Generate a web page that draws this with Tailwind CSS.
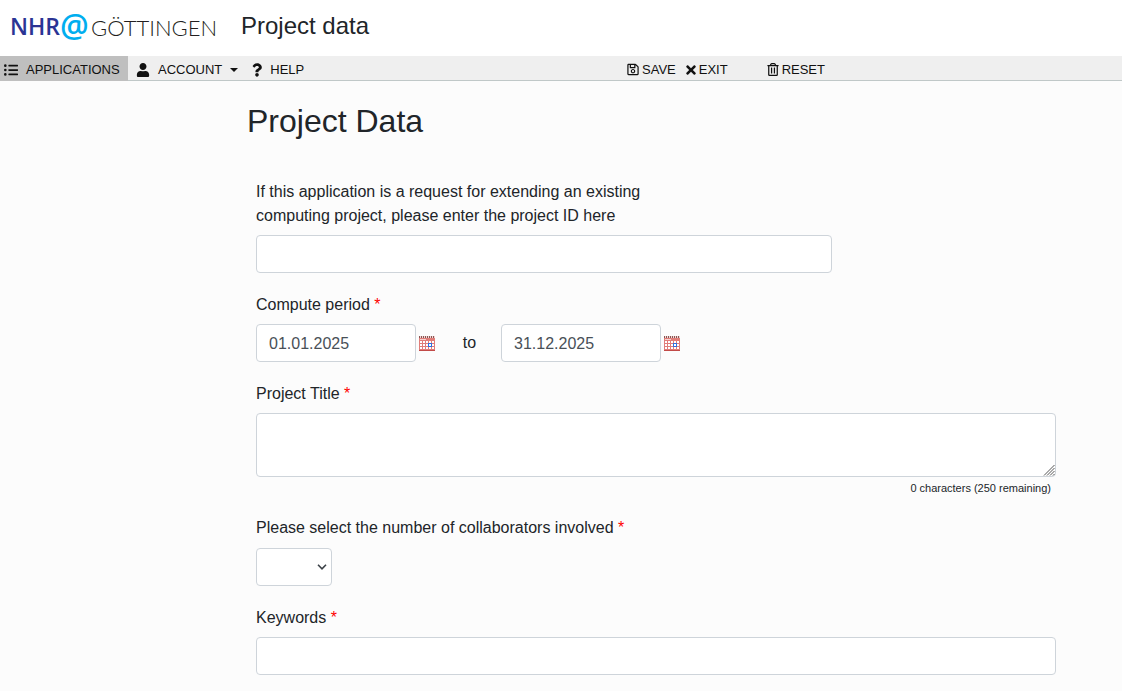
<!DOCTYPE html>
<html lang="en">
<head>
<meta charset="utf-8">
<meta name="viewport" content="width=device-width, initial-scale=1">
<title>Project data</title>
<script src="https://cdn.jsdelivr.net/npm/@tailwindcss/browser@4"></script>
</head>
<body class="min-h-screen bg-[#fcfcfc] font-['Liberation_Sans',Arial,sans-serif] text-base text-[#212529]">
<svg class="hidden" aria-hidden="true">
  <symbol id="calendar" viewBox="0 -1 16 16" shape-rendering="crispEdges">
    <rect y="0" width="16" height="2" fill="#f0d8d6"/>
    <path d="M0 0h1v2H0zM2 0h1v2H2zM4 0h1v2H4zM6 0h1v2H6zM8 0h1v2H8zM10 0h1v2h-1zM12 0h1v2h-1zM14 0h1v2h-1z" fill="#8a5552"/>
    <rect y="2" width="16" height="13" fill="#e07d79"/>
    <rect x="1" y="3" width="6" height="1" fill="#f6cfcd"/>
    <path d="M1 5h2v2H1zM4 5h2v2H4zM7 5h2v2H7zM10 5h2v2h-2zM13 5h2v2h-2zM1 8h2v2H1zM4 8h2v2H4zM7 8h2v2H7zM10 8h2v2h-2zM13 8h2v2h-2zM1 11h2v2H1zM4 11h2v2H4zM7 11h2v2H7zM10 11h2v2h-2zM13 11h2v2h-2z" fill="#fff"/>
    <rect x="9" y="7" width="4" height="4" fill="#2f6fe0"/>
    <rect x="10" y="8" width="2" height="2" fill="#fff"/>
    <rect y="14" width="16" height="1" fill="#c24a48"/>
  </symbol>
</svg>
<header class="flex h-14 items-center bg-white pb-1">
  <a href="#" aria-label="NHR@Göttingen" class="flex w-[241px] shrink-0 items-center pl-2.5">
    <svg class="h-12 w-[220px]" viewBox="0 -4 220 48">
      <text x="0" y="29" font-family="Open Sans, sans-serif" font-weight="600" font-size="23" fill="#2b3494">NHR</text>
      <text x="50" y="31" font-family="Open Sans, sans-serif" font-weight="600" font-size="32" fill="#00aeef">@</text>
      <text x="81" y="30" font-family="Lato, sans-serif" font-weight="300" font-size="22" fill="#231f20">GÖTTINGEN</text>
    </svg>
  </a>
  <p class="text-2xl">Project data</p>
</header>
<nav class="flex h-[25px] items-stretch border-b border-[#c0c8c8] bg-[#efefef] text-[13px] text-[#111]">
  <div class="flex w-[627px] shrink-0">
    <a href="#" class="-mb-px flex w-32 items-center gap-2 bg-[#bfbfbf] pt-0.5 pl-1">
      <svg class="size-3.5" viewBox="0 0 512 512" fill="currentColor"><path d="M48 48a48 48 0 1 0 48 48 48 48 0 0 0-48-48zm0 160a48 48 0 1 0 48 48 48 48 0 0 0-48-48zm0 160a48 48 0 1 0 48 48 48 48 0 0 0-48-48zm448 16H176a16 16 0 0 0-16 16v32a16 16 0 0 0 16 16h320a16 16 0 0 0 16-16v-32a16 16 0 0 0-16-16zm0-320H176a16 16 0 0 0-16 16v32a16 16 0 0 0 16 16h320a16 16 0 0 0 16-16V80a16 16 0 0 0-16-16zm0 160H176a16 16 0 0 0-16 16v32a16 16 0 0 0 16 16h320a16 16 0 0 0 16-16v-32a16 16 0 0 0-16-16z"/></svg>
      APPLICATIONS
    </a>
    <button type="button" class="flex items-center gap-2 pt-[3px] pl-2">
      <svg class="h-3.5 w-3.5" viewBox="0 0 448 512" fill="currentColor"><path d="M224 256c70.7 0 128-57.3 128-128S294.7 0 224 0 96 57.3 96 128s57.3 128 128 128zm89.6 32h-16.7c-22.2 10.2-46.9 16-72.9 16s-50.6-5.8-72.9-16h-16.7C60.2 288 0 348.2 0 422.4V464c0 26.5 21.5 48 48 48h352c26.5 0 48-21.5 48-48v-41.6c0-74.2-60.2-134.4-134.4-134.4z"/></svg>
      ACCOUNT
      <svg class="h-1 w-2" viewBox="0 0 8 4" fill="currentColor"><path d="M0 0h8L4 4z"/></svg>
    </button>
    <a href="#" class="flex items-center gap-2 pt-[3px] pl-3.5">
      <svg class="h-3.5 w-2.5" viewBox="0 0 384 512" fill="currentColor"><path d="M202.021 0C122.202 0 70.503 32.703 29.914 91.026c-7.363 10.58-5.093 25.086 5.178 32.874l43.138 32.709c10.373 7.865 25.132 6.026 33.253-4.148 25.049-31.381 43.63-49.449 82.757-49.449 30.764 0 68.816 19.799 68.816 49.631 0 22.552-18.617 34.134-48.993 51.164-35.423 19.86-82.299 44.576-82.299 106.405V320c0 13.255 10.745 24 24 24h72.471c13.255 0 24-10.745 24-24v-5.773c0-42.86 125.268-44.645 125.268-160.627C377.504 66.256 286.902 0 202.021 0zM192 373.459c-38.196 0-69.271 31.075-69.271 69.271 0 38.195 31.075 69.27 69.271 69.27s69.271-31.075 69.271-69.271-31.075-69.27-69.271-69.27z"/></svg>
      HELP
    </a>
  </div>
  <div class="flex pt-[3px]">
    <button type="button" class="flex items-center gap-[3px]">
      <svg class="h-[13px] w-3" viewBox="0 0 448 512" fill="currentColor"><path d="M433.941 129.941l-83.882-83.882A48 48 0 0 0 316.118 32H48C21.49 32 0 53.49 0 80v352c0 26.51 21.49 48 48 48h352c26.51 0 48-21.49 48-48V163.882a48 48 0 0 0-14.059-33.941zM272 80v80H144V80h128zm122 352H54a6 6 0 0 1-6-6V86a6 6 0 0 1 6-6h42v104c0 13.255 10.745 24 24 24h176c13.255 0 24-10.745 24-24V83.882l78.243 78.243a6 6 0 0 1 1.757 4.243V426a6 6 0 0 1-6 6zM224 232c-48.523 0-88 39.477-88 88s39.477 88 88 88 88-39.477 88-88-39.477-88-88-88zm0 128c-22.056 0-40-17.944-40-40s17.944-40 40-40 40 17.944 40 40-17.944 40-40 40z"/></svg>
      SAVE
    </button>
    <button type="button" class="ml-2.5 flex items-center gap-[3px]">
      <svg class="h-3.5 w-2.5" viewBox="0 0 352 512" fill="currentColor"><path d="M242.72 256l100.07-100.07c12.28-12.28 12.28-32.19 0-44.48l-22.24-22.24c-12.28-12.28-32.19-12.28-44.48 0L176 189.28 75.93 89.21c-12.28-12.28-32.19-12.28-44.48 0L9.21 111.45c-12.28 12.28-12.28 32.19 0 44.48L109.28 256 9.21 356.07c-12.28 12.28-12.28 32.19 0 44.48l22.24 22.24c12.28 12.28 32.2 12.28 44.48 0L176 322.72l100.07 100.07c12.28 12.28 32.2 12.28 44.48 0l22.24-22.24c12.28-12.28 12.28-32.19 0-44.48L242.72 256z"/></svg>
      EXIT
    </button>
    <button type="button" class="ml-[39px] flex items-center gap-[3px]">
      <svg class="h-[13px] w-3" viewBox="0 0 448 512" fill="currentColor"><path d="M268 416h24a12 12 0 0 0 12-12V188a12 12 0 0 0-12-12h-24a12 12 0 0 0-12 12v216a12 12 0 0 0 12 12zM432 80h-82.41l-34-56.7A48 48 0 0 0 274.41 0H173.59a48 48 0 0 0-41.16 23.3L98.41 80H16A16 16 0 0 0 0 96v16a16 16 0 0 0 16 16h16v336a48 48 0 0 0 48 48h288a48 48 0 0 0 48-48V128h16a16 16 0 0 0 16-16V96a16 16 0 0 0-16-16zM171.84 50.91A6 6 0 0 1 177 48h94a6 6 0 0 1 5.15 2.91L293.61 80H154.39zM368 464H80V128h288zm-212-48h24a12 12 0 0 0 12-12V188a12 12 0 0 0-12-12h-24a12 12 0 0 0-12 12v216a12 12 0 0 0 12 12z"/></svg>
      RESET
    </button>
  </div>
</nav>
<main class="pt-5 pr-[66px] pb-4 pl-[247px]">
  <h1 class="text-[32px] leading-10">Project Data</h1>
  <form class="mt-[39px] ml-[9px] flex flex-col gap-5">
    <div>
      <label for="pid" class="mb-[7px] block max-w-[400px] leading-6">If this application is a request for extending an existing computing project, please enter the project ID here</label>
      <input id="pid" type="text" class="block h-[38px] w-full max-w-[576px] rounded border border-[#ced4da] bg-white px-3 text-[#495057]">
    </div>
    <div>
      <label for="from" class="mb-[7px] block leading-6">Compute period <span class="text-[#f00]">*</span></label>
      <div class="flex items-center">
        <input id="from" type="text" value="01.01.2025" class="h-[38px] w-40 rounded border border-[#ced4da] bg-white px-3 pt-0.5 text-[#495057]">
        <button type="button" aria-label="Choose start date" class="ml-[3px]"><svg class="size-4"><use href="#calendar"/></svg></button>
        <label for="to" class="w-[66px] pl-[3px] text-center">to</label>
        <input id="to" type="text" value="31.12.2025" class="h-[38px] w-40 rounded border border-[#ced4da] bg-white px-3 pt-0.5 text-[#495057]">
        <button type="button" aria-label="Choose end date" class="ml-[3px]"><svg class="size-4"><use href="#calendar"/></svg></button>
      </div>
    </div>
    <div>
      <label for="title" class="mb-[7px] block leading-6">Project Title <span class="text-[#f00]">*</span></label>
      <div class="relative">
        <textarea id="title" class="block h-16 w-full resize-none rounded border border-[#ced4da] bg-white px-3 py-1.5 text-[#495057]"></textarea>
        <svg class="pointer-events-none absolute right-px bottom-px size-3" viewBox="0 0 12 12" stroke="#555" stroke-width="1"><path d="M1 11.500L11.500 1M4 11.500L11.500 4M7 11.500L11.500 7M10 11.500l1.500-1.500"/></svg>
      </div>
      <p class="mt-[3px] pr-[5px] text-right text-[11px] leading-4">0 characters (250 remaining)</p>
    </div>
    <div>
      <label for="collab" class="mb-2 block leading-6">Please select the number of collaborators involved <span class="text-[#f00]">*</span></label>
      <div class="grid w-[76px] items-center">
        <select id="collab" class="col-start-1 row-start-1 h-[38px] appearance-none rounded border border-[#ced4da] bg-white px-3 text-[#495057]"><option></option></select>
        <svg class="pointer-events-none col-start-1 row-start-1 mr-[5px] h-1.5 w-2.5 justify-self-end" viewBox="0 0 10 6" fill="none" stroke="#3c4248" stroke-width="1.6"><path d="M1 .8l4 4 4-4"/></svg>
      </div>
    </div>
    <div>
      <label for="kw" class="mb-[7px] block leading-6">Keywords <span class="text-[#f00]">*</span></label>
      <input id="kw" type="text" class="block h-[38px] w-full rounded border border-[#ced4da] bg-white px-3 text-[#495057]">
    </div>
  </form>
</main>
</body>
</html>
